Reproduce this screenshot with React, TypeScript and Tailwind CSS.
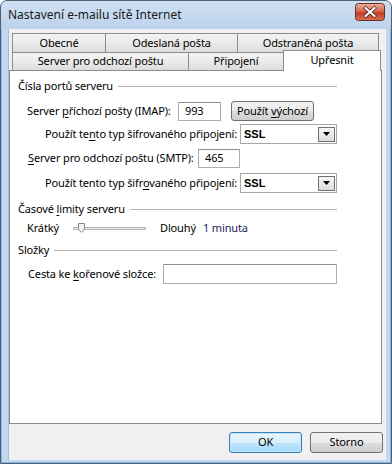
import React from 'react';

function U({ children }: { children: string }) {
  return <span className="underline underline-offset-[2px] decoration-[1px]">{children}</span>;
}

function GroupHeader({ children }: { children: React.ReactNode }) {
  return (
    <div className="flex items-center h-[16px] pl-[8px] pr-[44px]">
      <span className="whitespace-nowrap">{children}</span>
      <div className="flex-1 h-px bg-[#b4b4b4] ml-[5px]" />
    </div>
  );
}

function TextBox({ value, className }: { value?: string; className: string }) {
  return (
    <div
      className={`bg-white border border-[#abadb3] border-t-[#8e8f8f] flex items-center pl-[6px] ${className}`}
    >
      {value}
    </div>
  );
}

function Select({ value }: { value: string }) {
  return (
    <div className="w-[97px] h-[20px] bg-white border border-[#a6a6a6] flex items-center justify-between pl-[3px] pr-[1px]">
      <span className="font-semibold text-[11px] tracking-normal font-['Liberation_Sans',sans-serif]">{value}</span>
      <div className="w-[17px] h-[15px] border border-[#707070] bg-[linear-gradient(#f6f6f6,#dcdcdc)] flex items-center justify-center">
        <svg width="7" height="4" viewBox="0 0 7 4">
          <path d="M0 0h7L3.5 4z" fill="#000" />
        </svg>
      </div>
    </div>
  );
}

function Tab({ label, w, first }: { label: string; w: string; first?: boolean }) {
  return (
    <div
      className={`${w} ${first ? '' : '-ml-px'} h-[20px] border border-[#898c95] bg-[linear-gradient(#f3f3f3,#ebebeb_50%,#dcdcdc)] flex items-center justify-center`}
    >
      {label}
    </div>
  );
}

function CloseButton() {
  return (
    <svg width="30" height="18" viewBox="0 0 30 18" className="-mt-[6px]">
      <defs>
        <linearGradient id="cb" x1="0" y1="0" x2="0" y2="1">
          <stop offset="0" stopColor="#eeb0a0" />
          <stop offset="0.45" stopColor="#d66a52" />
          <stop offset="0.55" stopColor="#c23c24" />
          <stop offset="1" stopColor="#d9704f" />
        </linearGradient>
      </defs>
      <rect x="0.5" y="0.5" width="29" height="17" rx="3" fill="url(#cb)" stroke="#6e2d26" />
      <path d="M10.5 5l9 8M19.5 5l-9 8" stroke="#4a2420" strokeWidth="3.4" strokeLinecap="square" />
      <path d="M10.5 5l9 8M19.5 5l-9 8" stroke="#fff" strokeWidth="2" strokeLinecap="square" />
    </svg>
  );
}

export default function App() {
  return (
    <div className="w-[392px] h-[464px] flex flex-col bg-[#c3d7ef] border border-[#4e5d70] rounded-t-[7px] shadow-[inset_0_0_0_1px_#7fb6e4] font-['Noto_Sans',sans-serif] text-[11px] tracking-[-0.14px] text-black overflow-hidden">
      {/* Title bar */}
      <div className="h-[28px] shrink-0 flex items-center justify-between pl-[7px] pr-[6px] bg-[linear-gradient(#cfe0f4,#bcd2ec)]">
        <span className="text-[12px] tracking-normal text-[#1a1a1a] -mt-[1px]">Nastavení e-mailu sítě Internet</span>
        <CloseButton />
      </div>

      {/* Client area */}
      <div className="ml-[7px] w-[378px] flex-1 mb-[3px] bg-[#f0f0f0] flex flex-col border-l border-[#a9bcd2]">
        {/* Tabs row 1 */}
        <div className="flex mt-[4px] ml-[3px]">
          <Tab label="Obecné" w="w-[94px]" first />
          <Tab label="Odeslaná pošta" w="w-[133px]" />
          <Tab label="Odstraněná pošta" w="w-[142px]" />
        </div>
        {/* Tabs row 2 */}
        <div className="flex items-end h-[21px] -mt-[3px] ml-[3px] relative z-10">
          <div className="w-[177px] h-[17px] mb-[1px] border-x border-[#898c95] bg-[linear-gradient(#f3f3f3,#ebebeb_50%,#dcdcdc)] flex items-center justify-center">
            Server pro odchozí poštu
          </div>
          <div className="w-[96px] -ml-px h-[17px] mb-[1px] border-x border-[#898c95] bg-[linear-gradient(#f3f3f3,#ebebeb_50%,#dcdcdc)] flex items-center justify-center">
            Připojení
          </div>
          <div className="w-[98px] -ml-px h-[21px] border-x border-t border-[#898c95] bg-white flex items-start justify-center pt-[1px]">
            Upřesnit
          </div>
        </div>

        {/* Panel */}
        <div className="-mt-px w-[373px] h-[354px] bg-white border border-[#898c95] flex flex-col">
          <div className="mt-[7px]">
            <GroupHeader>
              Čísla portů serveru
            </GroupHeader>
          </div>

          <div className="flex items-center h-[20px] mt-[7px] pl-[17px]">
            <span className="w-[151px] whitespace-nowrap">
              Server <U>p</U>říchozí pošty (IMAP):
            </span>
            <TextBox value="993" className="w-[43px] h-[19px]" />
            <div className="ml-[10px] w-[83px] h-[20px] rounded-[3px] border border-[#707070] bg-[linear-gradient(#f2f2f2,#ebebeb_50%,#dddddd_50%,#cfcfcf)] flex items-center justify-center">
              <span>
                Použít <U>v</U>ýchozí
              </span>
            </div>
          </div>

          <div className="flex items-center h-[20px] mt-[3px] pl-[35px]">
            <span className="w-[195px] whitespace-nowrap">
              Použít te<U>n</U>to typ šifrovaného připojení:
            </span>
            <Select value="SSL" />
          </div>

          <div className="flex items-center h-[20px] mt-[4px] pl-[18px]">
            <span className="w-[170px] whitespace-nowrap">
              <U>S</U>erver pro odchozí poštu (SMTP):
            </span>
            <TextBox value="465" className="w-[42px] h-[19px]" />
          </div>

          <div className="flex items-center h-[20px] mt-[5px] pl-[35px]">
            <span className="w-[195px] whitespace-nowrap">
              Použít tento typ šifr<U>o</U>vaného připojení:
            </span>
            <Select value="SSL" />
          </div>

          <div className="mt-[8px]">
            <GroupHeader>
              Časové <U>l</U>imity serveru
            </GroupHeader>
          </div>

          <div className="flex items-center h-[16px] mt-[3px] pl-[17px]">
            <span className="w-[46px]">Krátký</span>
            <div className="w-[73px] h-[10px] relative flex items-center">
              <div className="w-full h-[3px] border border-[#b8b8b8] bg-[#e6e6e6]" />
              <svg className="absolute left-[5px] top-[0px]" width="7" height="10" viewBox="0 0 7 10">
                <path d="M0.5 0.5h6v6l-3 3l-3-3z" fill="#f0f0f0" stroke="#8a8a8a" />
              </svg>
            </div>
            <span className="ml-[14px] w-[43px]">Dlouhý</span>
            <span className="text-[#1b1b5a]">1 minuta</span>
          </div>

          <div className="mt-[6px]">
            <GroupHeader>Složky</GroupHeader>
          </div>

          <div className="flex items-center h-[20px] mt-[6px] pl-[18px]">
            <span className="w-[135px] whitespace-nowrap">
              Cesta ke <U>k</U>ořenové složce:
            </span>
            <TextBox className="w-[174px] h-[20px]" />
          </div>
        </div>

        {/* Buttons */}
        <div className="flex justify-end gap-[8px] mt-[8px] w-[374px]">
          <div className="w-[73px] h-[21px] rounded-[3px] border border-[#3c7fb1] bg-[linear-gradient(#eaf6fd,#d9f0fc_50%,#bee6fd_50%,#a7d9f5)] shadow-[inset_0_0_0_1px_#bfe6fa] flex items-center justify-center">
            OK
          </div>
          <div className="w-[73px] h-[21px] rounded-[3px] border border-[#707070] bg-[linear-gradient(#f2f2f2,#ebebeb_50%,#dddddd_50%,#cfcfcf)] flex items-center justify-center">
            Storno
          </div>
        </div>
      </div>
    </div>
  );
}
